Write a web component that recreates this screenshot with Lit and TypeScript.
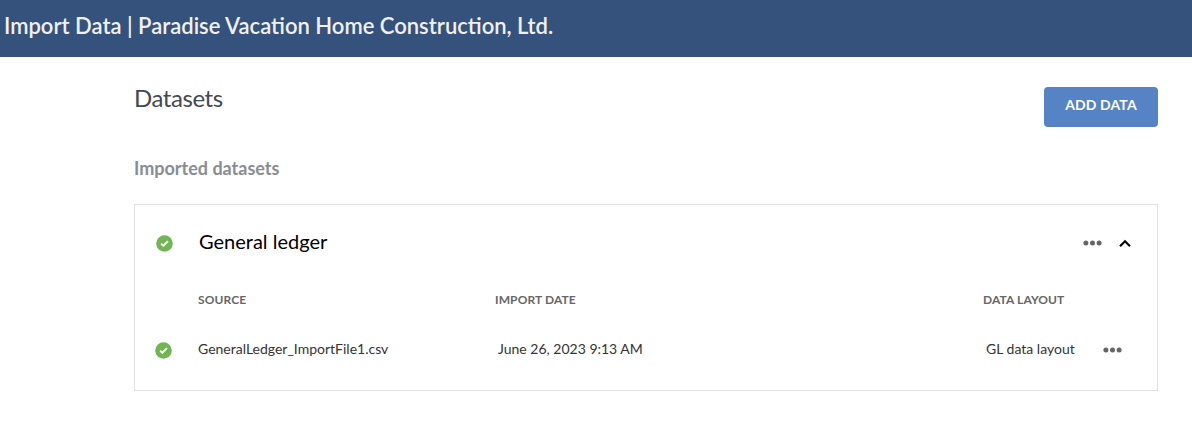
import { LitElement, html, css } from "lit";
import { customElement } from "lit/decorators.js";

const check = html`<svg class="check" width="17" height="17" viewBox="0 0 17 17"><circle cx="8.5" cy="8.5" r="8.3" fill="#72b556"/><path d="M5.1 8.7 7.4 10.7 12 6.2" fill="none" stroke="#fff" stroke-width="1.8"/></svg>`;
const dots = html`<svg class="dots" width="19" height="6" viewBox="0 0 19 6" fill="#666"><circle cx="2.9" cy="3" r="2.5"/><circle cx="9.5" cy="3" r="2.5"/><circle cx="16.1" cy="3" r="2.5"/></svg>`;

@customElement("app-root")
export class AppRoot extends LitElement {
  static styles = css`
    :host { display: block; height: 436px; background: #fff; font-family: Lato, sans-serif; overflow: hidden; }
    * { box-sizing: border-box; }
    svg { display: block; }
    header { height: 57px; background: #35527c; color: #f0f0f0; font-size: 22px; line-height: 27px; padding: 12px 4px 0; white-space: nowrap; }
    .title { display: inline-block; font-weight: 600; }
    main { margin: 0 34px 0 134px; }
    .top { display: flex; justify-content: space-between; height: 99px; padding-top: 30px; }
    h1 { margin: -3px 0 0; font-size: 24px; line-height: 28px; font-weight: 400; letter-spacing: -0.45px; color: #444851; }
    button { width: 114px; height: 40px; border: 0; border-radius: 4px; background: #5583c5; color: #fff; font: 700 14px/16px Lato, sans-serif; letter-spacing: 0.1px; padding: 0 0 4px; }
    h2 { margin: 0; font-size: 18px; line-height: 24px; font-weight: 700; color: #888d96; }
    .card { margin-top: 24px; height: 187px; border: 1px solid #e2e2e2; }
    .head { display: flex; align-items: center; height: 76px; padding: 0 26px 0 21px; }
    .head h3 { margin: 0 auto 0 26px; padding-bottom: 4px; font-size: 20px; line-height: 24px; font-weight: 400; color: #000; }
    .chev { margin-left: 17px; }
    .cols { display: grid; grid-template-columns: 42px 297px 488px 120px auto; padding-left: 21px; align-items: center; }
    .labels { height: 36px; font-size: 12px; font-weight: 700; letter-spacing: 0.1px; color: #666; }
    .row { height: 66px; font-size: 14px; color: #333; }
    .row span { padding-bottom: 4px; }
    .row .check { margin-left: -1px; }
    .shift { padding-left: 3px; }
  `;
  render() {
    return html`
      <header><span class="title">Import Data | Paradise Vacation Home Construction, Ltd.</span></header>
      <main>
        <div class="top"><h1>Datasets</h1><button>ADD DATA</button></div>
        <h2>Imported datasets</h2>
        <section class="card">
          <div class="head">${check}<h3>General ledger</h3>${dots}
            <svg class="chev" width="12" height="9" viewBox="0 0 12 9"><path d="M1 7.3 6 2.3l5 5" fill="none" stroke="#000" stroke-width="2.1"/></svg></div>
          <div class="cols labels"><span></span><span>SOURCE</span><span>IMPORT DATE</span><span>DATA LAYOUT</span></div>
          <div class="cols row">${check}<span>GeneralLedger_ImportFile1.csv</span><span class="shift">June 26, 2023 9:13 AM</span><span class="shift">GL data layout</span>${dots}</div>
        </section>
      </main>`;
  }
}
